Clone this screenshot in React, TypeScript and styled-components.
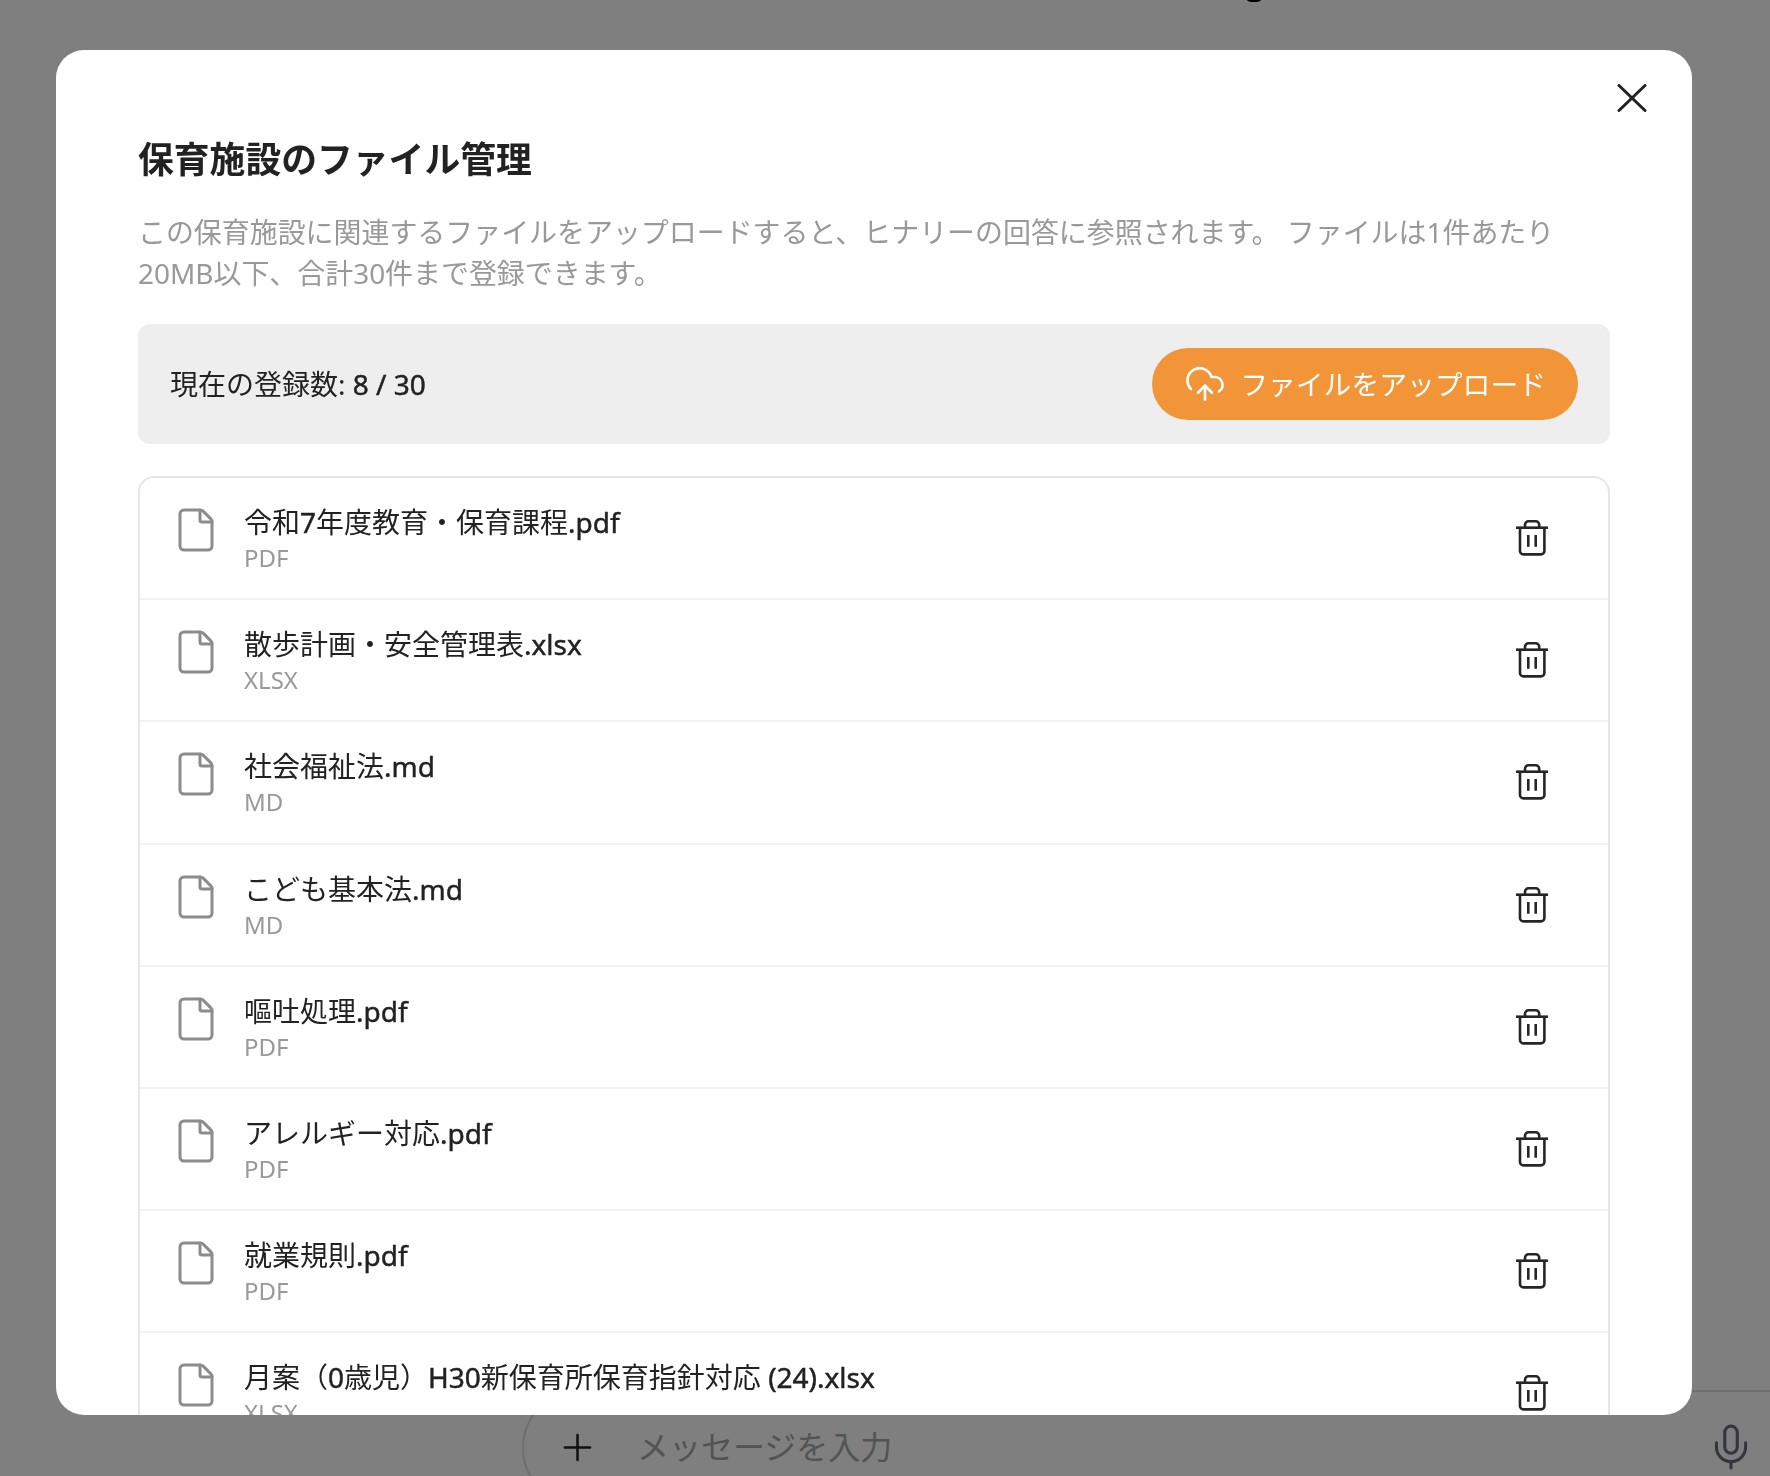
import React from "react";
import styled, { createGlobalStyle } from "styled-components";
import { CloudUpload, File as FileIcon, Mic, Plus } from "lucide-react";

const GlobalStyle = createGlobalStyle`
  * { box-sizing: border-box; }
  html, body { margin: 0; padding: 0; height: 100%; }
  body {
    font-family: "Noto Sans", "Noto Sans CJK JP", sans-serif;
    color: #222;
  }
`;

const Page = styled.div`
  position: relative;
  width: 100%;
  height: 100vh;
  overflow: hidden;
  background: #fcfffc;
  display: flex;
  flex-direction: column;
  justify-content: flex-end;
`;

const HiddenGlyph = styled.div`
  position: absolute;
  top: 0;
  left: 1247px;
  width: 14px;
  height: 2px;
  border-radius: 0 0 7px 7px / 0 0 2px 2px;
  background: #000;
`;

const Composer = styled.div`
  height: 116px;
  margin: 0 -80px -30px 522px;
  padding: 0 92px 2px 32px;
  display: flex;
  align-items: center;
  background: #fff;
  border: 2px solid #dedede;
  border-radius: 58px;
`;

const AddIcon = styled(Plus)`
  flex: none;
  color: #222;
`;

const Placeholder = styled.span`
  flex: 1;
  margin-left: 38px;
  font-size: 32px;
  line-height: 44px;
  color: #a6a6a6;
`;

const MicIcon = styled(Mic)`
  flex: none;
  color: #666c78;
`;

const Overlay = styled.div`
  position: fixed;
  inset: 0;
  padding: 50px 78px 61px 56px;
  display: flex;
  background: rgba(0, 0, 0, 0.5);
`;

const Modal = styled.section`
  position: relative;
  flex: 1;
  min-width: 0;
  padding: 83px 82px 0 82px;
  overflow: hidden;
  background: #fff;
  border-radius: 28px;
`;

const CloseButton = styled.button`
  position: absolute;
  top: 34px;
  right: 45px;
  width: 30px;
  height: 28px;
  padding: 0;
  border: 0;
  background: none;
  color: #222;
  display: block;
`;

const Title = styled.h2`
  margin: 0;
  font-size: 35.8px;
  line-height: 52px;
  font-weight: 700;
  color: #222;
`;

const Description = styled.p`
  margin: 27px 0 30px;
  font-size: 27.95px;
  line-height: 41px;
  color: #999;
`;

const StatusBar = styled.div`
  height: 120px;
  padding: 0 32px;
  display: flex;
  align-items: center;
  justify-content: space-between;
  background: #eee;
  border-radius: 12px;
`;

const Count = styled.div`
  font-size: 28px;
  line-height: 40px;
  color: #222;
`;

const Latin = styled.span`
  -webkit-text-stroke: 0.45px currentColor;
`;

const UploadButton = styled.button`
  height: 72px;
  padding: 0 32px 0 32px;
  display: flex;
  align-items: center;
  gap: 14px;
  border: 0;
  border-radius: 36px;
  background: #f19538;
  color: #fff;
  font-family: inherit;
  font-size: 27.8px;
  white-space: nowrap;
`;

const UploadLabel = styled.span`
  margin-top: -3px;
`;

const FileList = styled.ul`
  margin: 32px 0 0;
  padding: 0;
  list-style: none;
  border: 2px solid #e6e6ea;
  border-radius: 16px;
`;

const FileRow = styled.li`
  height: 122.2px;
  padding: 24px 60px 0 32px;
  display: flex;
  align-items: flex-start;
  gap: 24px;
  border-bottom: 2px solid #f2f2f2;
`;

const DocIcon = styled(FileIcon)`
  flex: none;
  margin-top: 4px;
  color: #8c8c8c;
`;

const FileInfo = styled.div`
  flex: 1;
  min-width: 0;
`;

const FileName = styled.div`
  font-size: 28px;
  line-height: 40px;
  color: #222;
`;

const FileType = styled.div`
  margin-top: -1px;
  font-size: 24px;
  line-height: 34px;
  color: #999;
`;

const DeleteButton = styled.button`
  flex: none;
  align-self: center;
  margin-top: -24px;
  padding: 0;
  border: 0;
  background: none;
  display: flex;
  color: #262626;
`;

const TrashIcon = () => (
  <svg width="32" height="36" viewBox="0 0 32 36" fill="none" stroke="currentColor" strokeWidth="2.6" strokeLinejoin="round">
    <path d="M0 7.7H32" />
    <path d="M9 7.7V4.7a3.4 3.4 0 0 1 3.4-3.4h7.4a3.4 3.4 0 0 1 3.4 3.4V7.7" />
    <path d="M4 7.7V31a3.4 3.4 0 0 0 3.4 3.4H25a3.4 3.4 0 0 0 3.4-3.4V7.7" />
    <path d="M12.3 15V26.7M19.7 15V26.7" />
  </svg>
);

const CloseIcon = () => (
  <svg width="30" height="28" viewBox="0 0 30 28" fill="none" stroke="currentColor" strokeWidth="3" strokeLinecap="round">
    <path d="M2 1.5 28 26.5M28 1.5 2 26.5" />
  </svg>
);

const files = [
  { name: "令和7年度教育・保育課程.pdf", type: "PDF" },
  { name: "散歩計画・安全管理表.xlsx", type: "XLSX" },
  { name: "社会福祉法.md", type: "MD" },
  { name: "こども基本法.md", type: "MD" },
  { name: "嘔吐処理.pdf", type: "PDF" },
  { name: "アレルギー対応.pdf", type: "PDF" },
  { name: "就業規則.pdf", type: "PDF" },
  { name: "月案（0歳児）H30新保育所保育指針対応 (24).xlsx", type: "XLSX" },
];

const withLatinRuns = (text: string) =>
  text.split(/([\x20-\x7e]+)/).map((part, index) =>
    index % 2 === 1 ? <Latin key={index}>{part}</Latin> : part
  );

export default function App() {
  return (
    <>
      <GlobalStyle />
      <Page>
        <HiddenGlyph />
        <Composer>
          <AddIcon size={43} strokeWidth={1.4} />
          <Placeholder>メッセージを入力</Placeholder>
          <MicIcon size={50} strokeWidth={1.5} />
        </Composer>
        <Overlay>
          <Modal>
            <CloseButton aria-label="閉じる">
              <CloseIcon />
            </CloseButton>
            <Title>保育施設のファイル管理</Title>
            <Description>
              この保育施設に関連するファイルをアップロードすると、ヒナリーの回答に参照されます。 ファイルは1件あたり20MB以下、合計30件まで登録できます。
            </Description>
            <StatusBar>
              <Count>
                現在の登録数: <Latin>8 / 30</Latin>
              </Count>
              <UploadButton>
                <CloudUpload size={42} strokeWidth={1.5} />
                <UploadLabel>ファイルをアップロード</UploadLabel>
              </UploadButton>
            </StatusBar>
            <FileList>
              {files.map((file) => (
                <FileRow key={file.name}>
                  <DocIcon size={48} strokeWidth={1.5} />
                  <FileInfo>
                    <FileName>{withLatinRuns(file.name)}</FileName>
                    <FileType>{file.type}</FileType>
                  </FileInfo>
                  <DeleteButton aria-label="削除">
                    <TrashIcon />
                  </DeleteButton>
                </FileRow>
              ))}
            </FileList>
          </Modal>
        </Overlay>
      </Page>
    </>
  );
}
